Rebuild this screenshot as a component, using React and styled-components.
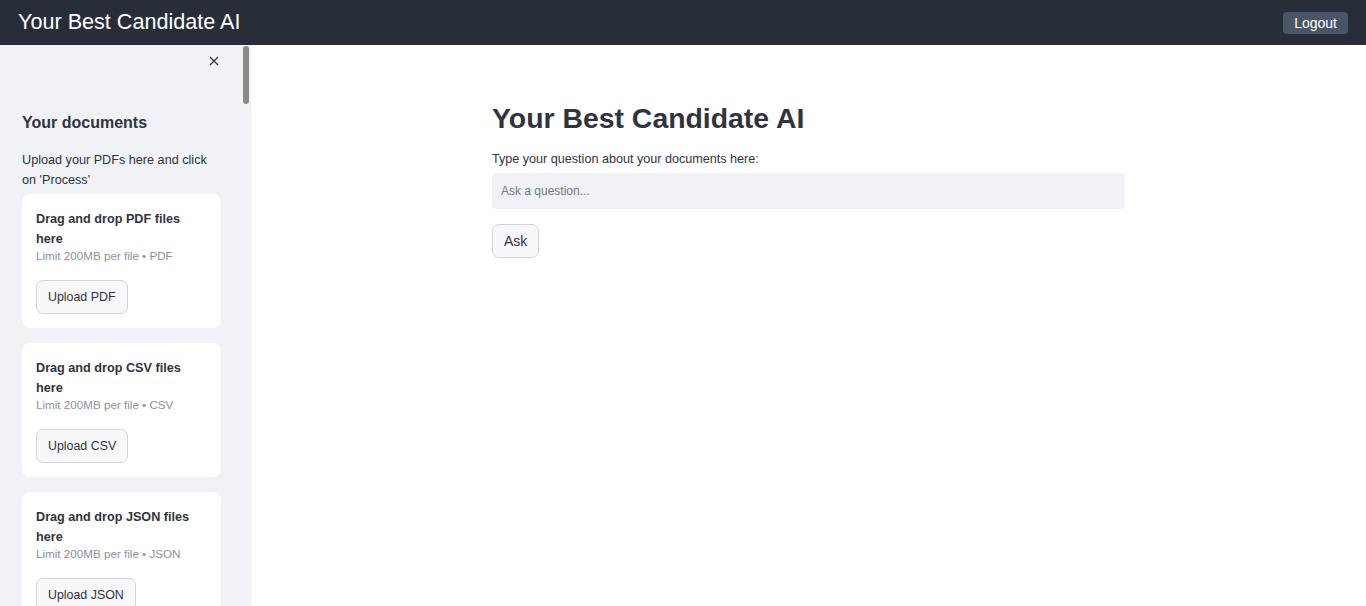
import React from "react"
import styled, { createGlobalStyle } from "styled-components"

const GlobalStyle = createGlobalStyle`
  html, body {
    margin: 0;
    padding: 0;
    height: 100%;
    overflow: hidden;
  }
  body {
    font-family: "Liberation Sans", Arial, sans-serif;
    color: #31333f;
    background: #ffffff;
  }
  #root {
    height: 100%;
  }
`

const uploads = [
  { kind: "PDF" },
  { kind: "CSV" },
  { kind: "JSON" },
]

const App = () => {
  return (
    <>
      <GlobalStyle />
      <Page>
        <TopBar>
          <BrandTitle>Your Best Candidate AI</BrandTitle>
          <LogoutButton>Logout</LogoutButton>
        </TopBar>
        <Body>
          <Sidebar>
            <SidebarScroll>
              <CloseRow>
                <CloseButton aria-label="Close sidebar">
                  <svg width="10" height="10" viewBox="0 0 10 10">
                    <path d="M1 1 L9 9 M9 1 L1 9" stroke="#31333f" strokeWidth="1.2" />
                  </svg>
                </CloseButton>
              </CloseRow>
              <SideHeading>Your documents</SideHeading>
              <SideText>Upload your PDFs here and click on 'Process'</SideText>
              <CardList>
                {uploads.map(u => (
                  <UploadCard key={u.kind}>
                    <DropTitle>Drag and drop {u.kind} files here</DropTitle>
                    <DropLimit>Limit 200MB per file • {u.kind}</DropLimit>
                    <Button $size={12.4}>Upload {u.kind}</Button>
                  </UploadCard>
                ))}
              </CardList>
            </SidebarScroll>
            <ScrollThumb />
          </Sidebar>
          <Main>
            <Column>
              <PageTitle>Your Best Candidate AI</PageTitle>
              <FieldLabel>Type your question about your documents here:</FieldLabel>
              <QuestionInput placeholder="Ask a question..." />
              <Button $size={14}>Ask</Button>
            </Column>
          </Main>
        </Body>
      </Page>
    </>
  )
}

export default App

const Page = styled.div`
  display: flex;
  flex-direction: column;
  height: 100vh;
`

const TopBar = styled.header`
  flex: 0 0 45px;
  display: flex;
  align-items: center;
  justify-content: space-between;
  padding: 0 18px;
  background: #272e3a;
`

const BrandTitle = styled.div`
  color: #ffffff;
  font-size: 21.6px;
  margin-top: -1px;
`

const LogoutButton = styled.button`
  font-family: inherit;
  font-size: 14px;
  color: #ffffff;
  background: #4a5568;
  border: none;
  border-radius: 4px;
  height: 22px;
  padding: 0 11px;
  margin-top: 1px;
`

const Body = styled.div`
  flex: 1;
  display: flex;
  min-height: 0;
`

const Sidebar = styled.aside`
  position: relative;
  flex: 0 0 251px;
  background: #f0f2f6;
`

const SidebarScroll = styled.div`
  height: 100%;
  overflow: hidden;
  padding: 0 30px 0 22px;
  box-sizing: border-box;
`

const ScrollThumb = styled.div`
  position: absolute;
  top: 1px;
  right: 2px;
  width: 6px;
  height: 58px;
  border-radius: 3px;
  background: #8a8a8a;
`

const CloseRow = styled.div`
  display: flex;
  justify-content: flex-end;
  height: 32px;
  padding-top: 11px;
  box-sizing: border-box;
`

const CloseButton = styled.span`
  display: flex;
  width: 10px;
  height: 10px;
  margin-right: 2px;
`

const SideHeading = styled.h2`
  margin: 35px 0 0;
  font-size: 16px;
  font-weight: 700;
  line-height: 22px;
`

const SideText = styled.p`
  margin: 16px 0 0;
  font-size: 12.65px;
  line-height: 20px;
`

const CardList = styled.div`
  display: flex;
  flex-direction: column;
  gap: 15px;
  margin-top: 4px;
`

const UploadCard = styled.div`
  display: flex;
  flex-direction: column;
  align-items: flex-start;
  background: #ffffff;
  border-radius: 8px;
  padding: 15px 14px 14px;
  height: 134px;
  box-sizing: border-box;
`

const DropTitle = styled.div`
  font-size: 12.65px;
  font-weight: 700;
  line-height: 20px;
  width: 160px;
`

const DropLimit = styled.div`
  font-size: 11.65px;
  line-height: 13px;
  color: #8e919b;
  margin-bottom: 18px;
`

const Button = styled.button`
  font-family: inherit;
  font-size: ${p => p.$size}px;
  color: #31333f;
  background: #f8f8fa;
  border: 1px solid #d3d5da;
  border-radius: 7px;
  height: 34px;
  padding: 0 11px;
`

const Main = styled.main`
  flex: 1;
  display: flex;
  justify-content: center;
`

const Column = styled.div`
  width: 633px;
  display: flex;
  flex-direction: column;
  align-items: flex-start;
  padding-top: 55px;
`

const PageTitle = styled.h1`
  margin: 0;
  font-size: 28.4px;
  font-weight: 700;
  line-height: 36px;
`

const FieldLabel = styled.label`
  margin-top: 15px;
  font-size: 12.6px;
  line-height: 16px;
`

const QuestionInput = styled.input`
  margin: 6px 0 15px;
  width: 100%;
  height: 36px;
  box-sizing: border-box;
  border: none;
  border-radius: 4px;
  background: #f0f2f6;
  padding: 0 9px;
  font-family: inherit;
  font-size: 12px;
  color: #31333f;
  outline: none;
  &::placeholder {
    color: #75777f;
  }
`
